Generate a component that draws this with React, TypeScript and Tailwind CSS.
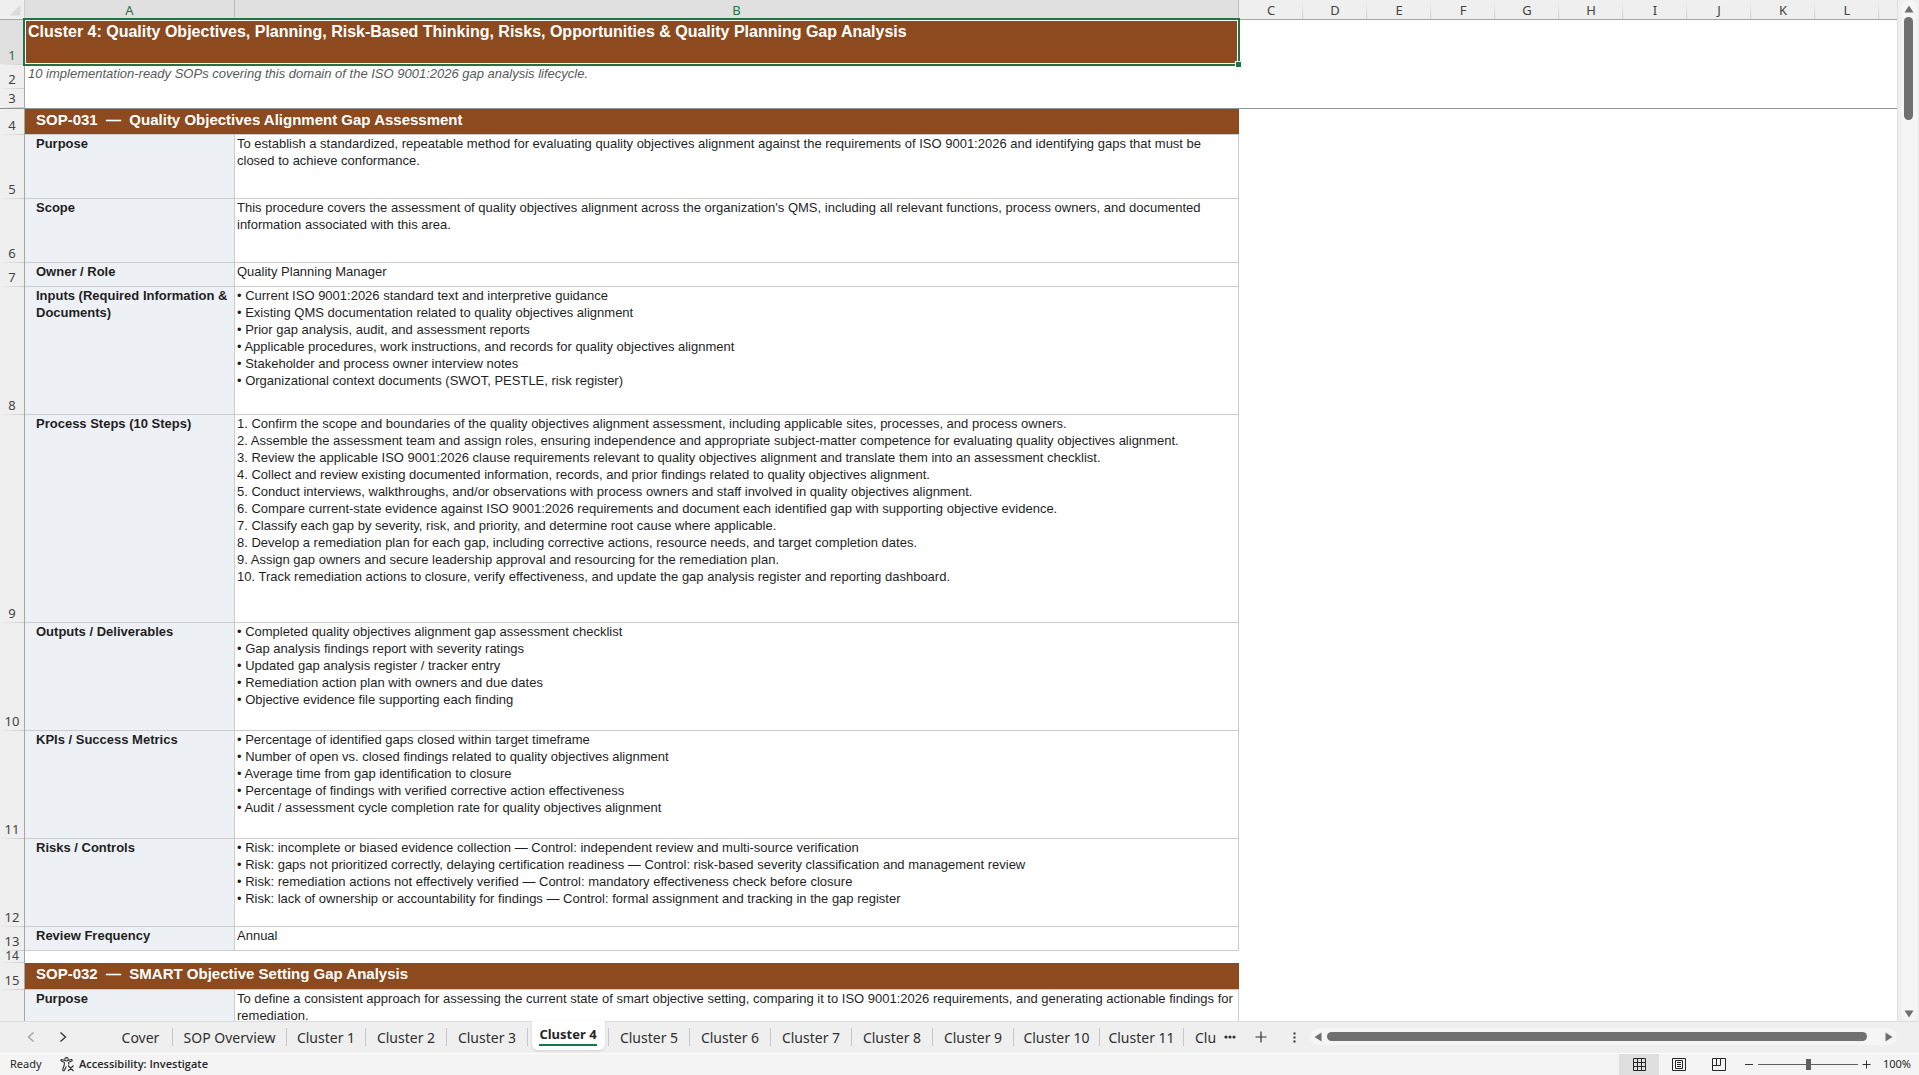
import { useState } from "react";

interface SheetRow {
  num: number;
  height: string;
  kind: "title" | "subtitle" | "blank" | "section" | "field";
  label?: string;
  text?: string;
  lines?: string[];
}

const columns = ["C", "D", "E", "F", "G", "H", "I", "J", "K", "L"];

const rows: SheetRow[] = [
  {
    num: 1,
    height: "h-[45px]",
    kind: "title",
    text: "Cluster 4: Quality Objectives, Planning, Risk-Based Thinking, Risks, Opportunities & Quality Planning Gap Analysis",
  },
  {
    num: 2,
    height: "h-6",
    kind: "subtitle",
    text: "10 implementation-ready SOPs covering this domain of the ISO 9001:2026 gap analysis lifecycle.",
  },
  { num: 3, height: "h-5", kind: "blank" },
  { num: 4, height: "h-[26px]", kind: "section", text: "SOP-031  —  Quality Objectives Alignment Gap Assessment" },
  {
    num: 5,
    height: "h-16",
    kind: "field",
    label: "Purpose",
    lines: [
      "To establish a standardized, repeatable method for evaluating quality objectives alignment against the requirements of ISO 9001:2026 and identifying gaps that must be closed to achieve conformance.",
    ],
  },
  {
    num: 6,
    height: "h-16",
    kind: "field",
    label: "Scope",
    lines: [
      "This procedure covers the assessment of quality objectives alignment across the organization's QMS, including all relevant functions, process owners, and documented information associated with this area.",
    ],
  },
  { num: 7, height: "h-6", kind: "field", label: "Owner / Role", lines: ["Quality Planning Manager"] },
  {
    num: 8,
    height: "h-32",
    kind: "field",
    label: "Inputs (Required Information & Documents)",
    lines: [
      "• Current ISO 9001:2026 standard text and interpretive guidance",
      "• Existing QMS documentation related to quality objectives alignment",
      "• Prior gap analysis, audit, and assessment reports",
      "• Applicable procedures, work instructions, and records for quality objectives alignment",
      "• Stakeholder and process owner interview notes",
      "• Organizational context documents (SWOT, PESTLE, risk register)",
    ],
  },
  {
    num: 9,
    height: "h-52",
    kind: "field",
    label: "Process Steps (10 Steps)",
    lines: [
      "1. Confirm the scope and boundaries of the quality objectives alignment assessment, including applicable sites, processes, and process owners.",
      "2. Assemble the assessment team and assign roles, ensuring independence and appropriate subject-matter competence for evaluating quality objectives alignment.",
      "3. Review the applicable ISO 9001:2026 clause requirements relevant to quality objectives alignment and translate them into an assessment checklist.",
      "4. Collect and review existing documented information, records, and prior findings related to quality objectives alignment.",
      "5. Conduct interviews, walkthroughs, and/or observations with process owners and staff involved in quality objectives alignment.",
      "6. Compare current-state evidence against ISO 9001:2026 requirements and document each identified gap with supporting objective evidence.",
      "7. Classify each gap by severity, risk, and priority, and determine root cause where applicable.",
      "8. Develop a remediation plan for each gap, including corrective actions, resource needs, and target completion dates.",
      "9. Assign gap owners and secure leadership approval and resourcing for the remediation plan.",
      "10. Track remediation actions to closure, verify effectiveness, and update the gap analysis register and reporting dashboard.",
    ],
  },
  {
    num: 10,
    height: "h-27",
    kind: "field",
    label: "Outputs / Deliverables",
    lines: [
      "• Completed quality objectives alignment gap assessment checklist",
      "• Gap analysis findings report with severity ratings",
      "• Updated gap analysis register / tracker entry",
      "• Remediation action plan with owners and due dates",
      "• Objective evidence file supporting each finding",
    ],
  },
  {
    num: 11,
    height: "h-27",
    kind: "field",
    label: "KPIs / Success Metrics",
    lines: [
      "• Percentage of identified gaps closed within target timeframe",
      "• Number of open vs. closed findings related to quality objectives alignment",
      "• Average time from gap identification to closure",
      "• Percentage of findings with verified corrective action effectiveness",
      "• Audit / assessment cycle completion rate for quality objectives alignment",
    ],
  },
  {
    num: 12,
    height: "h-22",
    kind: "field",
    label: "Risks / Controls",
    lines: [
      "• Risk: incomplete or biased evidence collection — Control: independent review and multi-source verification",
      "• Risk: gaps not prioritized correctly, delaying certification readiness — Control: risk-based severity classification and management review",
      "• Risk: remediation actions not effectively verified — Control: mandatory effectiveness check before closure",
      "• Risk: lack of ownership or accountability for findings — Control: formal assignment and tracking in the gap register",
    ],
  },
  { num: 13, height: "h-6", kind: "field", label: "Review Frequency", lines: ["Annual"] },
  { num: 14, height: "h-3", kind: "blank" },
  { num: 15, height: "h-[27px]", kind: "section", text: "SOP-032  —  SMART Objective Setting Gap Analysis" },
  {
    num: 16,
    height: "h-16",
    kind: "field",
    label: "Purpose",
    lines: [
      "To define a consistent approach for assessing the current state of smart objective setting, comparing it to ISO 9001:2026 requirements, and generating actionable findings for remediation.",
    ],
  },
];

const sheets = [
  { name: "Cover", width: "w-[64px]" },
  { name: "SOP Overview", width: "w-[114px]" },
  { name: "Cluster 1", width: "w-[79px]" },
  { name: "Cluster 2", width: "w-[81px]" },
  { name: "Cluster 3", width: "w-[81px]" },
  { name: "Cluster 4", width: "w-[81px]" },
  { name: "Cluster 5", width: "w-[81px]" },
  { name: "Cluster 6", width: "w-[81px]" },
  { name: "Cluster 7", width: "w-[81px]" },
  { name: "Cluster 8", width: "w-[81px]" },
  { name: "Cluster 9", width: "w-[81px]" },
  { name: "Cluster 10", width: "w-[86px]" },
  { name: "Cluster 11", width: "w-[84px]" },
];

const uiFont = "font-['Noto_Sans','Open_Sans',sans-serif]";

const RowCells = ({ row }: { row: SheetRow }) => {
  if (row.kind === "title") {
    return (
      <td colSpan={2} className="relative bg-[#8c4a1e] pl-[3px] align-top text-[16px] leading-[23px] font-bold text-white">
        {row.text}
        {/* Selection frame and fill handle */}
        <div className="absolute -top-[2px] -right-px -bottom-px -left-[2px] z-10 border-2 border-[#217346]">
          <div className="h-full border border-white" />
          <div className="absolute -right-[3px] -bottom-[3px] size-[6px] border-t border-l border-white bg-[#217346]" />
        </div>
      </td>
    );
  }
  if (row.kind === "subtitle") {
    return (
      <td colSpan={2} className="pl-[3px] align-top text-[13px] leading-[17px] text-[#595959] italic">
        {row.text}
      </td>
    );
  }
  if (row.kind === "section") {
    return (
      <td
        colSpan={2}
        className="border-b border-[#cccccc] bg-[#8c4a1e] pl-[11px] align-top text-[15px] leading-[21px] font-bold whitespace-pre text-white"
      >
        {row.text}
      </td>
    );
  }
  if (row.kind === "blank") {
    return <td colSpan={2} />;
  }
  return (
    <>
      <th
        scope="row"
        className="border-r border-b border-[#cccccc] bg-[#edf1f6] pl-[11px] text-left align-top text-[13px] leading-[17px] font-bold text-[#1f1f1f]"
      >
        {row.label}
      </th>
      <td className="border-r border-b border-[#cccccc] pl-[2px] align-top text-[13px] leading-[17px] text-[#1f1f1f]">
        {row.lines?.map((line) => (
          <div key={line}>{line}</div>
        ))}
      </td>
    </>
  );
};

const Grid = () => (
  <table className="w-full table-fixed border-separate border-spacing-0 font-['Liberation_Sans',Arial,sans-serif]">
    <colgroup>
      <col className="w-[25px]" />
      <col className="w-[210px]" />
      <col className="w-[1004px]" />
      {columns.map((c) => (
        <col key={c} className="w-16" />
      ))}
      <col />
    </colgroup>
    <thead>
      <tr className={`h-5 text-[13px] leading-[17px] text-[#444444] ${uiFont}`}>
        <td className="border-r border-b border-[#a6a6a6] border-r-[#cfcfcf] bg-[#efefef] p-0">
          <svg viewBox="0 0 24 19" className="block h-[19px] w-6">
            <path d="M20.5 4.5V15.500H9.500Z" fill="#dcdcdc" />
          </svg>
        </td>
        <th className="border-r border-b border-[#a6a6a6] border-r-[#bdbdbd] bg-[#e0e0e0] p-0 pt-[2px] font-normal text-[#217346]">A</th>
        <th className="border-r border-b border-[#a6a6a6] border-r-[#bdbdbd] bg-[#e0e0e0] p-0 pt-[2px] font-normal text-[#217346]">B</th>
        {columns.map((c) => (
          <th
            key={c}
            className="border-b border-[#a6a6a6] bg-[#efefef] bg-[linear-gradient(to_bottom,#efefef,#cccccc)] bg-[length:1px_100%] bg-right bg-no-repeat p-0 pt-[2px] font-normal"
          >
            {c}
          </th>
        ))}
        <td className="border-b border-[#a6a6a6] bg-[#efefef]" />
      </tr>
    </thead>
    <tbody>
      {rows.map((row) => (
        <tr
          key={row.num}
          className={`${row.height} ${row.num === 3 ? "[&>td]:border-b [&>td]:border-b-[#8f9494]" : ""}`}
        >
          <td
            className={`border-r border-[#a6a6a6] bg-[linear-gradient(to_right,#efefef,#cccccc)] bg-[length:100%_1px] bg-bottom bg-no-repeat p-0 text-center align-bottom ${uiFont} ${
              row.num === 1 ? "bg-[#e0e0e0] text-[#217346]" : "bg-[#efefef] text-[#444444]"
            }`}
          >
            <div className={row.num === 14 ? "h-3 text-[12px] leading-[10px]" : "pb-px text-[13px] leading-[17px]"}>
              {row.num === 16 ? "" : row.num}
            </div>
          </td>
          <RowCells row={row} />
          <td colSpan={11} />
        </tr>
      ))}
    </tbody>
  </table>
);

const VerticalScroll = () => (
  <div className="flex w-[22px] shrink-0 justify-center border-l border-[#e0e0e0] bg-[#efefef]">
    <div className="flex w-4 flex-col items-center rounded-full bg-[#f5f5f5] pt-[5px] pb-[3px]">
      <button aria-label="Scroll up">
        <svg width="10" height="8" viewBox="0 0 10 8" className="block">
          <path d="M5 0.500L9.500 7.500H0.500Z" fill="#6f6f6f" />
        </svg>
      </button>
      <div className="mt-1 h-[103px] w-[9px] rounded-full bg-[#707070]" />
      <div className="flex-1" />
      <button aria-label="Scroll down">
        <svg width="10" height="8" viewBox="0 0 10 8" className="block">
          <path d="M5 7.500L9.500 0.500H0.500Z" fill="#6f6f6f" />
        </svg>
      </button>
    </div>
  </div>
);

const SheetTabs = () => {
  const [active, setActive] = useState("Cluster 4");

  return (
    <div className={`flex h-8 shrink-0 items-start border-t border-[#dcdcdc] bg-[#efefef] text-[14px] text-[#303030] ${uiFont}`}>
      <button aria-label="Previous sheet" className="flex h-[30px] w-[62px] items-center justify-center">
        <svg width="8" height="12" viewBox="0 0 8 12" fill="none" stroke="#a0a0a0" strokeWidth="1.3">
          <path d="M6.500 1.500L1.500 6L6.500 10.500" />
        </svg>
      </button>
      <button aria-label="Next sheet" className="flex h-[30px] w-[2px] items-center justify-center">
        <svg width="8" height="12" viewBox="0 0 8 12" fill="none" stroke="#404040" strokeWidth="1.5" className="shrink-0">
          <path d="M1.500 1.500L6.500 6L1.500 10.500" />
        </svg>
      </button>
      <div className="w-[45px]" />
      {sheets.map((s) =>
        s.name === active ? (
          <div key={s.name} className={`-mt-px flex h-[29px] shrink-0 ${s.width}`}>
            <button className="mx-auto flex h-[29px] w-[73px] items-start justify-center rounded-b-md bg-white pt-[3px] font-bold shadow-sm">
              <span className="border-b-2 border-[#107c41] text-[13px] leading-[20px] text-[#262626]">{s.name}</span>
            </button>
            <div className="mt-[7px] h-[18px] w-px bg-[#c8c8c8]" />
          </div>
        ) : (
          <div key={s.name} className={`flex h-[30px] shrink-0 items-center ${s.width}`}>
            <button className="flex-1 whitespace-nowrap" onClick={() => setActive(s.name)}>
              {s.name}
            </button>
            <div className="h-[18px] w-px bg-[#c8c8c8]" />
          </div>
        )
      )}
      <button className="h-[30px] pl-[11px]">Clu</button>
      <button aria-label="More sheets" className="flex h-[30px] w-7 items-center justify-center">
        <svg width="12" height="4" viewBox="0 0 12 4" fill="#333333">
          <circle cx="2" cy="2" r="1.600" />
          <circle cx="6" cy="2" r="1.600" />
          <circle cx="10" cy="2" r="1.600" />
        </svg>
      </button>
      <button aria-label="New sheet" className="flex h-[30px] w-[34px] items-center justify-center">
        <svg width="12" height="12" viewBox="0 0 12 12" stroke="#333333" strokeWidth="1.2">
          <path d="M6 0.500V11.500M0.500 6H11.500" />
        </svg>
      </button>
      <div className="flex h-[30px] w-8 items-center justify-center">
        <svg width="3" height="11" viewBox="0 0 3 11" fill="#333333">
          <path d="M0.500 0.500h2v2h-2zM0.500 4.500h2v2h-2zM0.500 8.500h2v2h-2z" />
        </svg>
      </div>
      <div className="mt-[6px] mr-[22px] flex h-[17px] min-w-0 flex-1 items-center rounded-full bg-[#f5f5f5] px-1">
        <button aria-label="Scroll left">
          <svg width="8" height="10" viewBox="0 0 8 10" className="block">
            <path d="M0.500 5L7.500 0.500V9.500Z" fill="#6f6f6f" />
          </svg>
        </button>
        <div className="mr-[18px] ml-[5px] h-[9px] flex-1 rounded-full bg-[#707070]" />
        <button aria-label="Scroll right">
          <svg width="8" height="10" viewBox="0 0 8 10" className="block">
            <path d="M7.500 5L0.500 0.500V9.500Z" fill="#6f6f6f" />
          </svg>
        </button>
      </div>
    </div>
  );
};

const StatusBar = () => {
  const [zoom, setZoom] = useState(100);

  return (
    <div className={`flex h-[22px] shrink-0 items-stretch border-t border-white bg-[#f4f4f4] text-[11px] text-[#262626] ${uiFont}`}>
      <div className="flex w-[50px] items-center pl-[10px]">Ready</div>
      <button className="flex items-center gap-1 pl-[10px] font-['Open_Sans','Noto_Sans',sans-serif] font-semibold">
        <svg width="15" height="15" viewBox="0 0 15 15" fill="none" stroke="#303030" strokeWidth="1.1">
          <circle cx="6.500" cy="2.300" r="1.700" />
          <path d="M4.800 3.600L1.800 2.500C0.800 2.300 0.500 3.700 1.300 4L4.300 5.300V8L2.700 12.500C2.500 13.800 4 14.200 4.400 13.200L6.300 9.500" />
          <path d="M8.200 3.600L11.200 2.500C12.300 2.300 12.500 3.700 11.700 4L8.700 5.300V7.500M8 8.500L13.500 14M13.500 8.500L8 14" />
        </svg>
        <span>Accessibility: Investigate</span>
      </button>
      <div className="flex-1" />
      <button aria-label="Normal view" className="flex w-10 items-center justify-center bg-[#dfdfdf]">
        <svg width="13" height="13" viewBox="0 0 13 13" fill="none" stroke="#262626" strokeWidth="1">
          <path d="M0.500 0.500H12.500V12.500H0.500ZM4.500 0.500V12.500M8.500 0.500V12.500M0.500 4.500H12.500M0.500 8.500H12.500" />
        </svg>
      </button>
      <button aria-label="Page layout" className="flex w-10 items-center justify-center">
        <svg width="14" height="13" viewBox="0 0 14 13" fill="none" stroke="#262626" strokeWidth="1">
          <path d="M0.500 0.500H13.500V12.500H0.500ZM3.500 2.500H10.500V10.500H3.500ZM5 4.500H9M5 6.500H9M5 8.500H9" />
        </svg>
      </button>
      <button aria-label="Page break preview" className="flex w-10 items-center justify-center">
        <svg width="14" height="13" viewBox="0 0 14 13" fill="none" stroke="#262626" strokeWidth="1">
          <path d="M0.500 0.500H13.500V12.500H0.500ZM0.500 7.500H8.500V0.500M4.500 0.500V7.500" />
        </svg>
      </button>
      <button aria-label="Zoom out" className="flex w-[19px] items-center justify-end pr-[5px]" onClick={() => setZoom(zoom - 10)}>
        <svg width="8" height="9" viewBox="0 0 8 9" stroke="#333333">
          <path d="M0 4.500H8" />
        </svg>
      </button>
      <input
        type="range"
        aria-label="Zoom"
        min={0}
        max={200}
        value={zoom}
        onChange={(e) => setZoom(Number(e.target.value))}
        className="my-auto h-3 w-[100px] appearance-none bg-[linear-gradient(#606060,#606060)] bg-[length:100%_1px] bg-center bg-no-repeat [&::-webkit-slider-thumb]:h-[11px] [&::-webkit-slider-thumb]:w-[5px] [&::-webkit-slider-thumb]:appearance-none [&::-webkit-slider-thumb]:bg-[#606060]"
      />
      <button aria-label="Zoom in" className="flex w-[17px] items-center justify-center" onClick={() => setZoom(zoom + 10)}>
        <svg width="9" height="9" viewBox="0 0 9 9" stroke="#333333">
          <path d="M0.500 4.500H8.500M4.500 0.500V8.500" />
        </svg>
      </button>
      <div className="flex w-11 items-center justify-end pr-2">{zoom}%</div>
    </div>
  );
};

const App: React.FC = () => {
  return (
    <div className="flex h-screen flex-col overflow-hidden bg-white">
      <div className="flex min-h-0 flex-1">
        <div className="min-w-0 flex-1 overflow-hidden">
          <Grid />
        </div>
        <VerticalScroll />
      </div>
      <SheetTabs />
      <StatusBar />
    </div>
  );
};

export default App;
